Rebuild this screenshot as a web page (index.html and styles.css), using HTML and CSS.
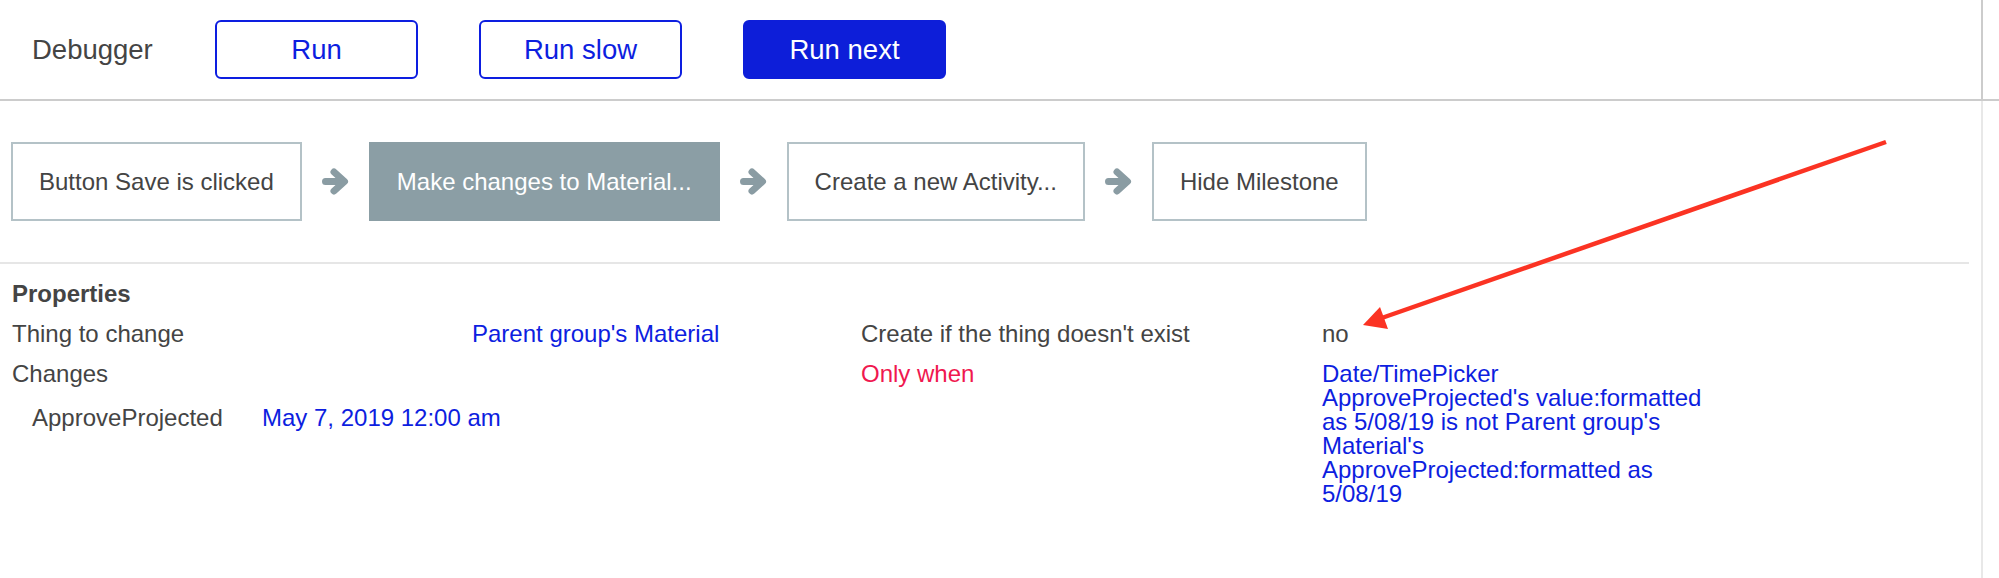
FILE: index.html
```html
<!DOCTYPE html>
<html lang="en">
<head>
<meta charset="utf-8">
<title>Debugger</title>
<link rel="stylesheet" href="styles.css">
</head>
<body>
<div class="app">
  <header class="topbar">
    <div class="topbar-main">
      <span class="title">Debugger</span>
      <button class="btn">Run</button>
      <button class="btn">Run slow</button>
      <button class="btn btn-primary">Run next</button>
    </div>
    <div class="topbar-side"></div>
  </header>
  <div class="content">
    <main class="panel">
      <div class="steps">
        <div class="step">Button Save is clicked</div>
        <svg class="step-arrow" viewBox="0 0 27 27" width="27" height="27" aria-hidden="true">
          <path d="M3.5 13.5 H21.5 M12 4 L22.5 13.5 L12 23" fill="none" stroke="#8a9ca3" stroke-width="7" stroke-linecap="round" stroke-linejoin="round"/>
        </svg>
        <div class="step step-active">Make changes to Material...</div>
        <svg class="step-arrow" viewBox="0 0 27 27" width="27" height="27" aria-hidden="true">
          <path d="M3.5 13.5 H21.5 M12 4 L22.5 13.5 L12 23" fill="none" stroke="#8a9ca3" stroke-width="7" stroke-linecap="round" stroke-linejoin="round"/>
        </svg>
        <div class="step">Create a new Activity...</div>
        <svg class="step-arrow" viewBox="0 0 27 27" width="27" height="27" aria-hidden="true">
          <path d="M3.5 13.5 H21.5 M12 4 L22.5 13.5 L12 23" fill="none" stroke="#8a9ca3" stroke-width="7" stroke-linecap="round" stroke-linejoin="round"/>
        </svg>
        <div class="step">Hide Milestone</div>
      </div>
      <hr class="sep">
      <section class="props">
        <div class="props-title">Properties</div>
        <div class="props-grid">
          <div>Thing to change</div>
          <div class="link">Parent group's Material</div>
          <div>Create if the thing doesn't exist</div>
          <div>no</div>

          <div class="changes">
            <div>Changes</div>
            <div class="nested">
              <div>ApproveProjected</div>
              <div class="link">May 7, 2019 12:00 am</div>
            </div>
          </div>
          <div class="cond">Only when</div>
          <div class="link">Date/TimePicker ApproveProjected's value:formatted as 5/08/19 is not Parent group's Material's ApproveProjected:formatted as 5/08/19</div>
        </div>
      </section>
    </main>
    <aside class="side"></aside>
  </div>
  <svg class="annotation" width="1999" height="578" viewBox="0 0 1999 578" aria-hidden="true">
    <line x1="1886" y1="142" x2="1376" y2="320" stroke="#fb3323" stroke-width="4.5"/>
    <polygon points="1363,325 1380,307 1388,329" fill="#fb3323"/>
  </svg>
</div>
</body>
</html>
```

FILE: styles.css
```css
html, body {
  margin: 0;
  padding: 0;
  background: #fff;
}

body {
  font-family: "Liberation Sans", Arial, Helvetica, sans-serif;
  color: #444;
}

.app {
  position: relative;
  height: 578px;
  display: flex;
  flex-direction: column;
  overflow: hidden;
}

/* Top bar */
.topbar {
  flex: none;
  display: flex;
  height: 101px;
  box-sizing: border-box;
  border-bottom: 2px solid #cccccc;
}

.topbar-main {
  flex: none;
  width: 1983px;
  box-sizing: border-box;
  border-right: 2px solid #cccccc;
  padding: 20px 0 20px 32px;
  display: flex;
  align-items: center;
}

.topbar-side {
  flex: 1;
}

.title {
  font-size: 27.5px;
  width: 183px;
  flex: none;
}

.btn {
  flex: none;
  width: 203px;
  height: 59px;
  box-sizing: border-box;
  border: 2px solid #0d1ee0;
  border-radius: 6px;
  background: #fff;
  color: #0d1ee0;
  font-family: inherit;
  font-size: 27.5px;
  padding: 0;
  margin-right: 61px;
  cursor: pointer;
}

.btn-primary {
  background: #0d1ed9;
  border-color: #0d1ed9;
  color: #fff;
}

/* Content */
.content {
  flex: 1;
  display: flex;
}

.panel {
  flex: none;
  width: 1983px;
  box-sizing: border-box;
  border-right: 2px solid #e8e8e8;
  padding-top: 41px;
}

.side {
  flex: 1;
}

.steps {
  display: flex;
  align-items: center;
  gap: 20px;
  padding-left: 11px;
}

.step {
  height: 79px;
  box-sizing: border-box;
  border: 2px solid #b4c2c7;
  padding: 0 26px;
  display: flex;
  align-items: center;
  font-size: 24px;
  white-space: nowrap;
  color: #444;
}

.step-active {
  background: #8b9ea5;
  border-color: #8b9ea5;
  color: #fff;
}

.step-arrow {
  flex: none;
  display: block;
}

.sep {
  margin: 41px 12px 0 0;
  border: 0;
  height: 2px;
  background: #e6e6e6;
}

.props {
  padding-left: 12px;
  font-size: 24px;
  line-height: 24px;
}

.props-title {
  font-weight: bold;
  margin-top: 18px;
}

.props-grid {
  display: grid;
  grid-template-columns: 460px 389px 461px 385px;
  row-gap: 16px;
  margin-top: 16px;
}

.changes {
  grid-column: 1 / 3;
}

.nested {
  display: grid;
  grid-template-columns: 230px auto;
  padding-left: 20px;
  margin-top: 20px;
}

.link {
  color: #0d1ee0;
}

.cond {
  color: #f0184f;
}

.annotation {
  position: absolute;
  top: 0;
  left: 0;
  pointer-events: none;
}
```
